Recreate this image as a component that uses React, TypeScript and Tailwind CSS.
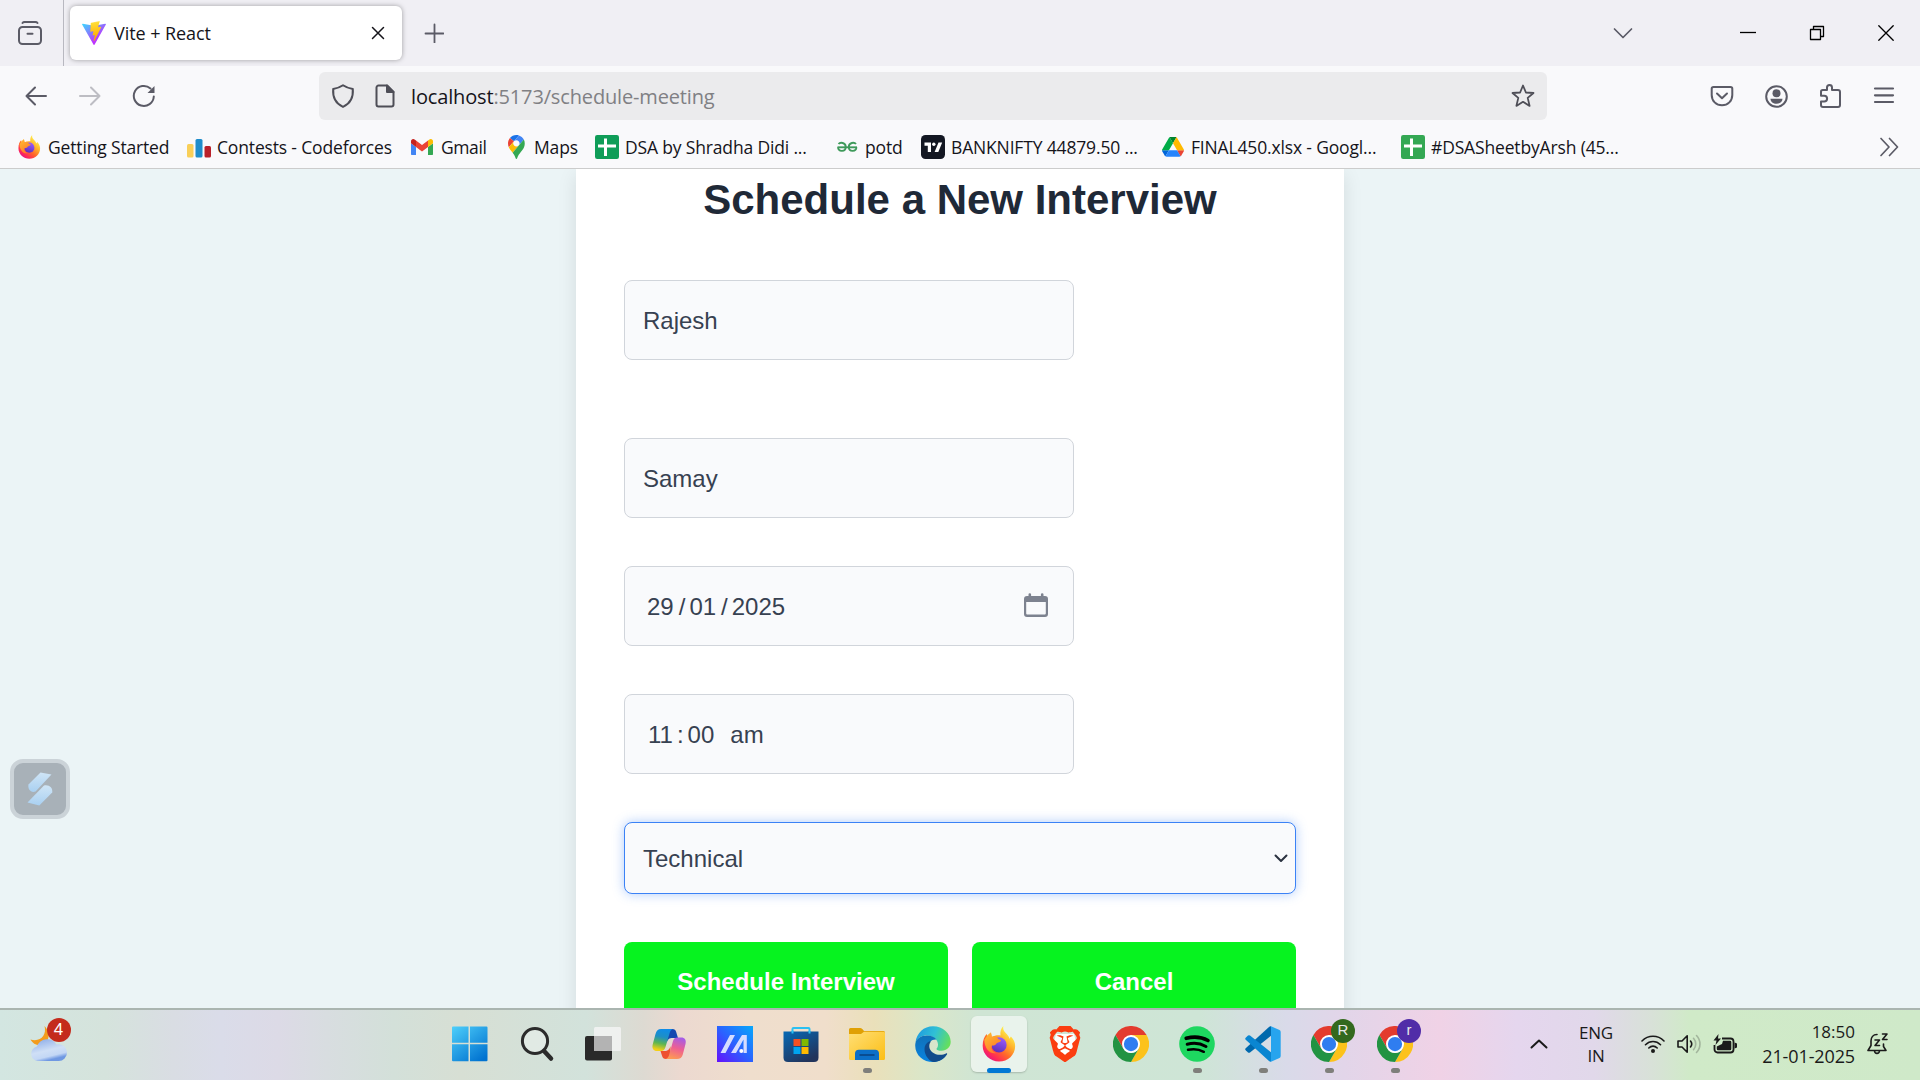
import type { ReactNode } from "react";
import { SiBrave } from "react-icons/si";

/* ---------- toolbar glyphs ---------- */

function Glyph({ children, className = "size-6", box = "0 0 24 24" }: { children: ReactNode; className?: string; box?: string }) {
  return (
    <svg viewBox={box} className={`shrink-0 ${className}`} fill="none" stroke="currentColor" strokeWidth="2" strokeLinecap="round" strokeLinejoin="round">
      {children}
    </svg>
  );
}

const ViteLogo = () => (
  <svg viewBox="0 0 256 257" className="size-6 shrink-0">
    <defs>
      <linearGradient id="vA" x1="0%" x2="58%" y1="8%" y2="78%">
        <stop offset="0%" stopColor="#41D1FF" />
        <stop offset="100%" stopColor="#BD34FE" />
      </linearGradient>
      <linearGradient id="vB" x1="43%" x2="50%" y1="2%" y2="89%">
        <stop offset="0%" stopColor="#FFEA83" />
        <stop offset="8%" stopColor="#FFDD35" />
        <stop offset="100%" stopColor="#FFA800" />
      </linearGradient>
    </defs>
    <path fill="url(#vA)" d="M255.153 37.938L134.897 252.976c-2.483 4.44-8.862 4.466-11.382.048L.875 37.958c-2.746-4.814 1.371-10.646 6.827-9.67l120.385 21.517a6.537 6.537 0 0 0 2.322-.004l117.867-21.483c5.438-.991 9.574 4.796 6.877 9.62Z" />
    <path fill="url(#vB)" d="M185.432.063L96.44 17.501a3.268 3.268 0 0 0-2.634 3.014l-5.474 92.456a3.268 3.268 0 0 0 3.997 3.378l24.777-5.718c2.318-.535 4.413 1.507 3.936 3.838l-7.361 36.047c-.495 2.426 1.782 4.5 4.151 3.78l15.304-4.649c2.372-.72 4.652 1.36 4.15 3.788l-11.698 56.621c-.732 3.542 3.979 5.473 5.943 2.437l1.313-2.028l72.516-144.72c1.215-2.423-.88-5.186-3.54-4.672l-25.505 4.922c-2.396.462-4.435-1.77-3.759-4.114l16.646-57.705c.677-2.35-1.37-4.583-3.769-4.113Z" />
  </svg>
);

function FirefoxLogo({ id, className }: { id: string; className: string }) {
  return (
    <svg viewBox="0 0 36 38" className={`shrink-0 ${className}`}>
      <defs>
        <linearGradient id={`${id}a`} x1="0.85" y1="0.1" x2="0.2" y2="0.95">
          <stop offset="0.05" stopColor="#fff44f" />
          <stop offset="0.35" stopColor="#ffb02a" />
          <stop offset="0.6" stopColor="#ff6a2a" />
          <stop offset="0.85" stopColor="#ff2a56" />
          <stop offset="1" stopColor="#e31587" />
        </linearGradient>
        <linearGradient id={`${id}b`} x1="0.7" y1="0" x2="0.3" y2="1">
          <stop offset="0" stopColor="#9a5cff" />
          <stop offset="1" stopColor="#5b2fb8" />
        </linearGradient>
        <linearGradient id={`${id}c`} x1="0" y1="0" x2="0.6" y2="1">
          <stop offset="0" stopColor="#ffc02e" />
          <stop offset="1" stopColor="#ff7a2a" />
        </linearGradient>
      </defs>
      <path fill={`url(#${id}a)`} d="M22.5 0c-.6 3 .3 5 2.3 7.200C27 9.500 28.500 11 29 13.500l1.500-2.500C33.500 14 35 17.500 35 21c0 9.400-7.600 16.500-17 16.500S.7 30.200.7 20.900C.7 15 2.500 11 5 8.500l1 3 3.500-4 .8 4C13 10 17 9.500 19.500 10 19 6 20 2.500 22.500 0z" />
      <circle cx="18" cy="20" r="8" fill={`url(#${id}b)`} />
      <path fill={`url(#${id}c)`} d="M2.500 14.500L6 9.500l3.500-3 .8 5c3.500-1 5.700.2 7.200 2.500 1.700.2 2.700.7 2.500 1.500-.5 1.500-3.500 1.800-4.800 3-.8 2-3.200 2.300-4.700 2-1.500 4 1 7 5 8-6 2-13-4-13-14z" />
    </svg>
  );
}

const SheetLogo = ({ fill }: { fill: string }) => (
  <svg viewBox="0 0 24 24" className="size-6 shrink-0">
    <rect width="24" height="24" rx="2.200" fill={fill} />
    <path d="M9 3.500h3v6h9v3h-9V21H9v-8.500H3v-3h6z" fill="#fff" />
  </svg>
);

const CodeforcesLogo = () => (
  <svg viewBox="0 0 24 24" className="size-6 shrink-0">
    <rect x="0" y="9" width="6.500" height="13.500" rx="1.500" fill="#f9cf58" />
    <rect x="8.500" y="4" width="7" height="18.500" rx="1.500" fill="#1f8dcb" />
    <rect x="17.500" y="11" width="6.500" height="11.500" rx="1.500" fill="#b9202a" />
  </svg>
);

const GmailLogo = () => (
  <svg viewBox="52 42 88 66" className="w-[22px] shrink-0">
    <path fill="#4285f4" d="M58 108h14V74L52 59v43c0 3.320 2.690 6 6 6" />
    <path fill="#34a853" d="M120 108h14c3.320 0 6-2.690 6-6V59l-20 15" />
    <path fill="#fbbc04" d="M120 48v26l20-15v-8c0-7.420-8.470-11.650-14.400-7.200" />
    <path fill="#ea4335" d="M72 74V48l24 18 24-18v26L96 92" />
    <path fill="#c5221f" d="M52 51v8l20 15V48l-5.600-4.200c-5.940-4.450-14.400-.22-14.400 7.200" />
  </svg>
);

const MapsLogo = () => (
  <svg viewBox="0 0 92.300 132.300" className="h-6 shrink-0">
    <path fill="#1a73e8" d="M60.200 2.200C55.800.8 51 0 46.100 0 32 0 19.300 6.400 10.800 16.500l21.800 18.300L60.200 2.200z" />
    <path fill="#ea4335" d="M10.800 16.500C4.100 24.500 0 34.900 0 46.100c0 8.700 1.700 15.700 4.600 22l28-33.300-21.800-18.300z" />
    <path fill="#4285f4" d="M46.200 28.500c9.800 0 17.700 7.900 17.700 17.700 0 4.300-1.600 8.300-4.200 11.400 0 0 13.900-16.600 27.500-32.700-5.600-10.800-15.300-19-27-22.700L32.600 34.800c3.300-3.800 8.100-6.300 13.600-6.300" />
    <path fill="#fbbc04" d="M46.200 63.800c-9.800 0-17.700-7.900-17.700-17.700 0-4.300 1.500-8.300 4.100-11.300l-28 33.300c4.800 10.600 12.800 19.200 21 29.900l34.100-40.500c-3.300 3.900-8.100 6.300-13.500 6.300" />
    <path fill="#34a853" d="M59.100 109.200c15.400-24.100 33.300-35 33.300-63 0-7.700-1.900-14.900-5.200-21.300L25.600 98c2.600 3.400 5.300 7.300 7.900 11.300 9.400 14.500 6.800 23.100 12.800 23.100s3.400-8.700 12.800-23.200" />
  </svg>
);

const GfgLogo = () => (
  <svg viewBox="0 0 24 24" className="size-6 shrink-0" fill="none" stroke="#3f9a5b" strokeWidth="1.900">
    <path d="M2.500 12.300h19.500" />
    <path d="M3.500 9c1.600-1.900 7.200-1.700 7.200 3 0 5-7.400 5.200-7.600.3M21 9c-1.600-1.900-7.200-1.700-7.200 3 0 5 7.400 5.200 7.600.3" />
  </svg>
);

const TradingViewLogo = () => (
  <svg viewBox="0 0 24 24" className="size-6 shrink-0">
    <rect width="24" height="24" rx="4.500" fill="#131722" />
    <path fill="#fff" d="M3.500 7.500H10V17H6.800v-6.200H3.500zM17.500 7.500h3.700L17.300 17h-3.700z" />
    <circle cx="12.800" cy="9.200" r="1.700" fill="#fff" />
  </svg>
);

const DriveLogo = () => (
  <svg viewBox="0 0 87.300 78" className="ml-px w-[22px] shrink-0">
    <path d="m6.600 66.850 3.850 6.650c.8 1.400 1.950 2.500 3.300 3.300l13.750-23.800h-27.500c0 1.550.4 3.100 1.200 4.500z" fill="#0066da" />
    <path d="m43.650 25-13.750-23.800c-1.350.8-2.500 1.900-3.300 3.300l-25.400 44a9.060 9.060 0 0 0-1.200 4.500h27.500z" fill="#00ac47" />
    <path d="m73.550 76.800c1.350-.8 2.500-1.900 3.300-3.300l1.600-2.750 7.650-13.250c.8-1.400 1.200-2.950 1.200-4.500h-27.502l5.852 11.500z" fill="#ea4335" />
    <path d="m43.650 25 13.750-23.800c-1.350-.8-2.900-1.200-4.500-1.200h-18.500c-1.600 0-3.150.45-4.500 1.200z" fill="#00832d" />
    <path d="m59.800 53h-32.300l-13.750 23.800c1.350.8 2.900 1.200 4.500 1.200h50.800c1.600 0 3.150-.45 4.500-1.200z" fill="#2684fc" />
    <path d="m73.400 26.500-12.700-22c-.8-1.400-1.950-2.500-3.300-3.300l-13.750 23.800 16.150 28h27.450c0-1.550-.4-3.100-1.200-4.500z" fill="#ffba00" />
  </svg>
);

/* ---------- browser chrome ---------- */

function TabStrip() {
  return (
    <header className="flex h-[66px] shrink-0 items-center bg-[#f0eff4] text-[#5b5b66]">
      <div className="flex h-full w-16 items-center border-r border-[#b8b8c0] pl-[18px]">
        <Glyph>
          <path d="M4.500 2c.5-.7 1-1 2-1h11c1 0 1.500.3 2 1" />
          <rect x="1" y="6" width="22" height="17" rx="3.500" />
          <path d="M9.500 12.800h5" />
        </Glyph>
      </div>
      <div className="ml-1.5 flex h-[54px] w-[332px] items-center rounded-md bg-white pl-3 pr-[17px] text-[#15141a] shadow-[0_0_5px_rgba(0,0,0,0.35)]">
        <ViteLogo />
        <span className="ml-2 flex-1 pt-px text-[18px] tracking-[-0.06px]">Vite + React</span>
        <Glyph className="size-3.5" box="0 0 14 14">
          <path d="M1.500 1.500l11 11M12.500 1.500l-11 11" strokeWidth="1.500" />
        </Glyph>
      </div>
      <Glyph className="ml-[22px] size-5" box="0 0 20 20">
        <path d="M10.500 1.500v18M1.500 10.500h18" strokeWidth="1.800" />
      </Glyph>
      <div className="flex-1" />
      <Glyph className="h-3 w-5" box="0 0 20 12">
        <path d="M1.500 2L10 10.500 18.500 2" strokeWidth="1.700" />
      </Glyph>
      <div className="ml-[107px] mr-[26px] flex items-center gap-[53px] text-black">
        <Glyph className="size-4" box="0 0 16 16">
          <path d="M0 7.500h16" strokeWidth="1.300" strokeLinecap="butt" />
        </Glyph>
        <Glyph className="size-4" box="0 0 16 16">
          <path d="M4.500 4V1.500h10v10H12M1.500 4.500h10v10h-10z" strokeWidth="1.300" />
        </Glyph>
        <Glyph className="size-4" box="0 0 16 16">
          <path d="M.8.8l14.400 14.400M15.200.8L.8 15.200" strokeWidth="1.300" />
        </Glyph>
      </div>
    </header>
  );
}

function NavBar() {
  return (
    <div className="flex h-[60px] shrink-0 items-center bg-[#f9f9fb] pl-6 pr-6 text-[#5b5b66]">
      <div className="flex items-center gap-[30px]">
        <Glyph>
          <path d="M22 12H2.500M11 3.500L2.500 12l8.500 8.500" />
        </Glyph>
        <Glyph className="size-6 text-[#bdbdc3]">
          <path d="M2 12h19.500M13 3.500l8.500 8.500-8.500 8.500" />
        </Glyph>
        <Glyph>
          <path d="M21.800 12.500A10 10 0 1 1 18.500 4.500" />
          <path d="M22.500 2v7h-7z" fill="currentColor" stroke="none" />
        </Glyph>
      </div>
      <div className="ml-[163px] flex h-12 w-[1228px] items-center rounded-md bg-[#ebebed] pl-3 pr-3 text-[#4e4e57]">
        <Glyph>
          <path d="M12 1.300c2.800 2 5.900 3 9.800 3.600.6 7.500-1.800 14.400-9.800 18-8-3.600-10.400-10.500-9.800-18C6.100 4.300 9.200 3.300 12 1.300z" />
        </Glyph>
        <Glyph className="ml-[18px] size-6">
          <path d="M5.500 1.500H14l6.500 6.500v12.500a2 2 0 0 1-2 2h-13a2 2 0 0 1-2-2v-17a2 2 0 0 1 2-2z" />
          <path d="M14 1.500V8h6.500z" fill="currentColor" />
        </Glyph>
        <p className="ml-3.5 flex-1 pt-0.5 text-xl tracking-[-0.15px] text-[#808084]">
          <span className="text-[#15141a]">localhost</span>:5173/schedule-meeting
        </p>
        <Glyph>
          <path d="M12 1.500l2.900 7 7.600.5-5.800 4.900 1.900 8L12 17.800l-6.600 4.100 1.900-8L1.500 9l7.600-.5z" strokeWidth="1.800" />
        </Glyph>
      </div>
      <div className="flex-1" />
      <div className="flex items-center gap-[30px]">
        <Glyph>
          <path d="M3.500 3h17a1.800 1.800 0 0 1 1.800 1.800V11c0 6-4.500 10.300-10.300 10.300S1.700 17 1.700 11V4.800A1.800 1.800 0 0 1 3.500 3z" />
          <path d="M7 9.500l5 4.800 5-4.800" />
        </Glyph>
        <Glyph>
          <circle cx="12.500" cy="12.500" r="10.300" />
          <circle cx="12.500" cy="9.300" r="4" fill="currentColor" stroke="none" />
          <path d="M6.500 14.700h12c0 3-2.700 5-6 5s-6-2-6-5z" fill="currentColor" stroke="none" />
        </Glyph>
        <Glyph>
          <path d="M3 9.500V7.800A1.800 1.800 0 0 1 4.800 6H9V3.500a2.500 2.500 0 0 1 5 0V6h6a2 2 0 0 1 2 2v13a2 2 0 0 1-2 2H5a2 2 0 0 1-2-2v-3.500h3.200a2.900 2.900 0 0 0 0-5.800H3z" />
        </Glyph>
        <Glyph>
          <path d="M3 4.500h18M3 11.300h18M3 18h18" strokeWidth="2.200" />
        </Glyph>
      </div>
    </div>
  );
}

function Bookmark({ icon, label, width }: { icon: ReactNode; label: string; width: string }) {
  return (
    <div className={`flex shrink-0 items-center ${width}`}>
      <span className="flex w-[30px] shrink-0 items-center">{icon}</span>
      <span className="whitespace-nowrap">{label}</span>
    </div>
  );
}

function BookmarksBar() {
  return (
    <div className="flex h-[43px] shrink-0 items-center border-b border-[#cccccc] bg-[#f9f9fb] pl-[18px] text-[17.5px] tracking-[-0.16px] text-[#15141a]">
      <Bookmark width="w-[169px]" label="Getting Started" icon={<FirefoxLogo id="fs" className="h-6" />} />
      <Bookmark width="w-[224px]" label="Contests - Codeforces" icon={<CodeforcesLogo />} />
      <Bookmark width="w-[93px] tracking-[-0.4px]" label="Gmail" icon={<GmailLogo />} />
      <Bookmark width="w-[91px]" label="Maps" icon={<span className="pl-1"><MapsLogo /></span>} />
      <Bookmark width="w-[240px]" label="DSA by Shradha Didi ..." icon={<SheetLogo fill="#0f9d58" />} />
      <Bookmark width="w-[86px]" label="potd" icon={<GfgLogo />} />
      <Bookmark width="w-[240px]" label="BANKNIFTY 44879.50 ..." icon={<TradingViewLogo />} />
      <Bookmark width="w-[240px]" label="FINAL450.xlsx - Googl..." icon={<DriveLogo />} />
      <Bookmark width="w-[240px]" label="#DSASheetbyArsh (45..." icon={<SheetLogo fill="#34a853" />} />
      <div className="flex-1" />
      <Glyph className="mr-[21px] h-5 w-5 text-[#5b5b66]" box="0 0 20 20">
        <path d="M2 1.500l8 8.500-8 8.500M10.500 1.500l8 8.500-8 8.500" strokeWidth="1.700" />
      </Glyph>
    </div>
  );
}

/* ---------- page ---------- */

function Field({ children, className = "" }: { children: ReactNode; className?: string }) {
  return (
    <div className={`flex h-20 w-[450px] items-center rounded-lg border border-[#d1d5db] bg-[#f9fafc] px-[18px] pt-0.5 text-2xl text-[#374151] ${className}`}>
      {children}
    </div>
  );
}

function SchedulePage() {
  return (
    <main className="relative flex h-[839px] shrink-0 justify-center overflow-hidden bg-[#ebf4f6] font-['Liberation_Sans',sans-serif]">
      <section className="flex h-[900px] w-[768px] flex-col bg-white px-12 shadow-[0_6px_18px_rgba(0,0,0,0.1)]">
        <h1 className="mt-1 text-center text-[42px] leading-[54px] font-bold text-[#1f2937]">Schedule a New Interview</h1>
        <Field className="mt-[53px]">Rajesh</Field>
        <Field className="mt-[78px]">Samay</Field>
        <Field className="mt-12 justify-between">
          <div className="flex pl-1">
            <span>29</span>
            <span className="ml-[5px]">/</span>
            <span className="ml-1">01</span>
            <span className="ml-[5px]">/</span>
            <span className="ml-1">2025</span>
          </div>
          <svg viewBox="0 0 24 24" className="mr-[7px] mb-1 size-6">
            <path fill="#7d828f" d="M4.500 1.500a1.300 1.300 0 0 1 2.600 0V3h9.800V1.500a1.300 1.300 0 0 1 2.600 0V3H21a3 3 0 0 1 3 3v15a3 3 0 0 1-3 3H3a3 3 0 0 1-3-3V6a3 3 0 0 1 3-3h1.500zM2.200 9v11.300c0 .8.500 1.300 1.300 1.300h17c.8 0 1.300-.5 1.300-1.300V9z" />
          </svg>
        </Field>
        <Field className="mt-12">
          <div className="flex pl-[5px]">
            <span>11</span>
            <span className="ml-1">:</span>
            <span className="ml-1">00</span>
            <span className="ml-4">am</span>
          </div>
        </Field>
        <div className="mt-12 flex h-[72px] shrink-0 items-center justify-between rounded-lg border border-[#3b82f6] bg-[#f9fafc] pl-[18px] pr-[7px] text-2xl text-[#374151] shadow-[0_0_12px_rgba(59,130,246,0.4)]">
          <span className="pt-0.5">Technical</span>
          <svg viewBox="0 0 14 9" className="mt-px h-[9px] w-3.5" fill="none" stroke="#2b3240" strokeWidth="2" strokeLinecap="round" strokeLinejoin="round">
            <path d="M1.500 1.500L7 7l5.500-5.500" />
          </svg>
        </div>
        <div className="mt-12 grid grid-cols-2 gap-6 text-2xl font-bold text-white">
          <button className="h-20 rounded-lg bg-[#06f31f]">Schedule Interview</button>
          <button className="h-20 rounded-lg bg-[#06f31f]">Cancel</button>
        </div>
      </section>
      <div className="absolute top-[590px] left-2.5 flex size-[60px] items-center justify-center rounded-[13px] border-4 border-[#cbd3d8] bg-[#a8b1b8]">
        <svg viewBox="0 0 26 34" className="h-[34px] w-[26px]">
          <defs>
            <linearGradient id="wg" x1="0" y1="0" x2="0" y2="1">
              <stop offset="0" stopColor="#cfe5f6" />
              <stop offset="1" stopColor="#a9d0f1" />
            </linearGradient>
          </defs>
          <path fill="url(#wg)" d="M13.500.5l11 2L8.500 19.500C4 21.500.5 17 1.500 12.500z" />
          <path fill="url(#wg)" d="M12.300 33.500l-11.800-3L17 13.500c5-1 9 2 8.200 7z" />
        </svg>
      </div>
    </main>
  );
}

/* ---------- taskbar icons ---------- */

const WindowsIcon = () => (
  <svg viewBox="0 0 36 36" className="size-9">
    <defs>
      <linearGradient id="win" gradientUnits="userSpaceOnUse" x1="0" y1="0" x2="28" y2="36">
        <stop offset="0" stopColor="#4fd0fb" />
        <stop offset="1" stopColor="#0072d0" />
      </linearGradient>
    </defs>
    <path fill="url(#win)" d="M0 1.500Q0 .5 1 .5h15.500v16.300H0zM18 .5h16.500q1 0 1 1v15.300H18zM0 18.300h16.500v17H1q-1 0-1-1zM18 18.300h17.500v16q0 1-1 1H18z" />
  </svg>
);

const SearchIcon = () => (
  <svg viewBox="0 0 36 36" className="size-9" fill="none" stroke="#2b2b2b" strokeLinecap="round">
    <circle cx="16" cy="15" r="12.600" fill="#e9f0ec" fillOpacity="0.6" strokeWidth="3" />
    <path d="M25.500 25.500l6.500 7" strokeWidth="4.500" />
  </svg>
);

const TaskViewIcon = () => (
  <svg viewBox="0 0 36 36" className="size-9">
    <rect x="0" y="10" width="27" height="24.500" rx="2" fill="#2a2a2a" />
    <rect x="9" y="1" width="27" height="24" rx="1.500" fill="#f5f5f5" fillOpacity="0.8" />
    <path d="M9 10h18v15H9z" fill="#b3b3b3" />
  </svg>
);

const CopilotIcon = () => (
  <svg viewBox="0 0 36 36" className="size-9">
    <defs>
      <linearGradient id="cpA" x1="0.5" y1="0" x2="0.3" y2="1">
        <stop offset="0" stopColor="#0f8ce8" />
        <stop offset="0.35" stopColor="#1e8fc4" />
        <stop offset="0.65" stopColor="#5cb552" />
        <stop offset="0.95" stopColor="#f3cf16" />
      </linearGradient>
      <linearGradient id="cpB" x1="0.7" y1="0" x2="0.4" y2="1">
        <stop offset="0" stopColor="#a45ce8" />
        <stop offset="0.5" stopColor="#ee5f92" />
        <stop offset="1" stopColor="#fd9a55" />
      </linearGradient>
    </defs>
    <path fill="#1448b0" d="M17 3h4.500c2 0 3 1 3.600 2.800L27 12h-5c-4 0-5 1-6.500 5z" />
    <path fill="#ee5030" d="M19.500 33H15c-2.300 0-3.300-1-4-3.200L9.500 25h4c3.500 0 5-1.500 6-5z" />
    <path fill="url(#cpA)" d="M10 3h12c-2 .5-2.800 2-3.500 4.500L14.500 21c-.8 2.800-2 4-4.500 4H6c-3.500 0-5.300-2.500-4.300-6.500L4.500 8C5.500 4.500 7 3 10 3z" />
    <path fill="url(#cpB)" d="M26 33H14.500c2-.5 3-2 3.700-4.500L22 15c.8-2.500 2-3.500 4.500-3.500h3.800c3.500 0 5.200 2.500 4.200 6.500l-2.700 10.500C31 31.700 29 33 26 33z" />
  </svg>
);

const MyAsusIcon = () => (
  <svg viewBox="0 0 36 36" className="size-9">
    <defs>
      <linearGradient id="asus" x1="0" y1="1" x2="1" y2="0">
        <stop offset="0" stopColor="#6410fb" />
        <stop offset="0.5" stopColor="#2a63ff" />
        <stop offset="1" stopColor="#06a8fb" />
      </linearGradient>
    </defs>
    <path d="M0 0h36v36H0z" fill="url(#asus)" />
    <path d="M13 9h5L8.500 27h-5zM25 9h4.800v18h-3.300V13.500L19 27h-5z" fill="#d5dcff" />
    <circle cx="24.300" cy="25" r="2" fill="#fff" />
  </svg>
);

const StoreIcon = () => (
  <svg viewBox="0 0 36 36" className="size-9">
    <defs>
      <linearGradient id="store" x1="0" y1="0" x2="0.6" y2="1">
        <stop offset="0" stopColor="#0669b5" />
        <stop offset="1" stopColor="#22345c" />
      </linearGradient>
    </defs>
    <path d="M9.500 8V3q0-1 1-1h15q1 0 1 1v5" fill="none" stroke="#2bc0f2" strokeWidth="2" />
    <path d="M.5 5.500h35v26q0 4.500-4.500 4.500H5Q.5 36 .5 31.500z" fill="url(#store)" />
    <path d="M9.500 5v2.500M26.500 5v2.500" stroke="#2bc0f2" strokeWidth="2" />
    <path d="M10.500 13h7v7h-7z" fill="#f25022" />
    <path d="M18.500 13h7v7h-7z" fill="#7fba00" />
    <path d="M10.500 21h7v7h-7z" fill="#00a4ef" />
    <path d="M18.500 21h7v7h-7z" fill="#ffb900" />
  </svg>
);

const ExplorerIcon = () => (
  <svg viewBox="0 0 36 36" className="size-9">
    <defs>
      <linearGradient id="fold" x1="0" y1="0" x2="1" y2="1">
        <stop offset="0" stopColor="#ffdf76" />
        <stop offset="1" stopColor="#fcbe15" />
      </linearGradient>
    </defs>
    <path d="M0 3.500Q0 2 1.500 2h9.800q1.500 0 2.500 1.500L15 5h19.500Q36 5 36 6.500V12H0z" fill="#e0a004" />
    <path d="M0 8h12l3-2.200h19.500Q36 5.800 36 7v25.500Q36 34 34.500 34h-33Q0 34 0 32.500z" fill="url(#fold)" />
    <path d="M6 34v-6.500q0-3.800 3.800-3.800h16.400q3.800 0 3.800 3.800V34z" fill="#0b6fc8" />
    <path d="M10.500 29h15" stroke="#09498b" strokeWidth="1.800" />
  </svg>
);

const EdgeIcon = () => (
  <svg viewBox="0 0 36 36" className="size-9">
    <defs>
      <linearGradient id="edA" x1="0" y1="0.3" x2="1" y2="0.6">
        <stop offset="0" stopColor="#1f9be0" />
        <stop offset="0.5" stopColor="#30c0d5" />
        <stop offset="1" stopColor="#66e05a" />
      </linearGradient>
      <linearGradient id="edB" x1="0.3" y1="0" x2="0.3" y2="1">
        <stop offset="0" stopColor="#1070b8" />
        <stop offset="1" stopColor="#0a84e0" />
      </linearGradient>
    </defs>
    <path fill="url(#edA)" d="M.5 16.500C1.500 7 9 .3 18 .3c10 0 17.700 7.200 17.700 15.500 0 5.500-4.200 9-9 9-3.200 0-5.200-.8-5.200-1.800 0-.8 1.500-1.200 1.500-4.500 0-5-5-9-11-9C6.500 9.500 2.500 12 .5 16.500z" />
    <path fill="url(#edB)" d="M.3 18C1 12.500 6 9.500 12 9.500c4 0 7.500 1.500 9.500 4-5-.5-8 2.800-8 7 0 7 6 11 10.500 11 2.500 0 5-.8 7-2C28 33.800 23.500 36 18 36 8 36-.7 28.500.3 18z" />
    <path fill="#114a8b" d="M14.500 15.200c-3.500 1.500-5 4.500-5 8C9.500 30 15 35.800 19 35.900c5.200-.2 10-3 13-7.400.5-.8-.3-1.500-1-1-1.500.8-3.500 1.300-5.700 1.300-6.500 0-11-4-11-8.600 0-2 .6-3.600 1.700-4.700z" />
  </svg>
);

const BraveIcon = () => (
  <span className="relative flex size-9 items-center justify-center">
    <svg viewBox="0 0 36 36" className="absolute size-9">
      <path d="M9 8h18l2 8-4 12-7 5-7-5-4-12z" fill="#fff" />
    </svg>
    <SiBrave className="relative size-9 text-[#fb3d10]" />
  </span>
);

const ChromeIcon = () => (
  <svg viewBox="0 0 48 48" className="size-9">
    <path d="M3.200 12A24 24 0 0 1 44.800 12H24L13.600 30z" fill="#e33b2e" />
    <path d="M44.800 12A24 24 0 0 1 24 48L34.400 30 24 12z" fill="#fcc21b" />
    <path d="M24 48A24 24 0 0 1 3.200 12L13.600 30a12 12 0 0 0 20.800 0z" fill="#229342" />
    <circle cx="24" cy="24" r="12" fill="#fff" />
    <circle cx="24" cy="24" r="9.500" fill="#2f7df0" />
  </svg>
);

const SpotifyIcon = () => (
  <svg viewBox="0 0 36 36" className="size-9">
    <circle cx="18" cy="18" r="17.800" fill="#1ed760" />
    <g fill="none" stroke="#000" strokeLinecap="round">
      <path d="M7.200 12.300c7.500-2 15.500-1.300 21.800 2.200" strokeWidth="3.600" />
      <path d="M8.200 18.300c6.500-1.700 13.200-1 18.800 2.200" strokeWidth="3" />
      <path d="M9 23.800c5.500-1.200 11-.7 15.800 2" strokeWidth="2.500" />
    </g>
  </svg>
);

const CodeIcon = () => (
  <svg viewBox="0 0 36 36" className="size-9">
    <path d="M26 .3L34.500 4q1.200.6 1.200 2v24q0 1.400-1.200 2L26 35.700z" fill="#27a4ee" />
    <path d="M26 .3v9.500L5 26.500q-1 .7-2 0l-2.300-2.200q-1-1 0-2L24 .9q1-.9 2-.6z" fill="#0069ad" />
    <path d="M26 35.700v-9.500L5 9.500q-1-.7-2 0L.7 11.700q-1 1 0 2L24 35.100q1 .9 2 .6z" fill="#0a86d1" />
  </svg>
);

function TaskItem({ children, state }: { children: ReactNode; state?: "running" | "active" }) {
  return (
    <div className="relative flex h-[70px] w-[66px] shrink-0 items-center justify-center">
      {state === "active" && <span className="absolute top-1.5 h-14 w-14 rounded-md bg-white/55 shadow-[0_1px_2px_rgba(0,0,0,0.2)]" />}
      <span className="relative mb-[3px] block">{children}</span>
      {state === "active" && <span className="absolute top-[58px] h-[5px] w-6 rounded-full bg-[#0078d4]" />}
      {state === "running" && <span className="absolute top-[58px] h-[5px] w-[9px] rounded-full bg-[#7f7f7b]" />}
    </div>
  );
}

function Badge({ children, className }: { children: ReactNode; className: string }) {
  return (
    <span className={`absolute flex size-6 items-center justify-center rounded-full font-['Liberation_Sans',sans-serif] text-[15px] text-[#e8e8e8] ${className}`}>
      {children}
    </span>
  );
}

function Taskbar() {
  return (
    <footer className="flex h-[72px] shrink-0 items-center border-t-2 border-[#aab5b0] bg-[linear-gradient(90deg,#d3e6e1_0%,#d5e3dc_5.500%,#d9dde3_9%,#dadce9_11.500%,#dcdae6_14.500%,#d8dde0_17%,#d3e0d9_20.500%,#d7dfd4_24%,#d2e2db_30.500%,#dddad2_33.500%,#ecd9d0_35.500%,#efdecd_39%,#f0decb_43%,#eae0ba_45.500%,#dbe6c8_48%,#cfe5d4_51%,#cee5d6_62.500%,#d9dae9_67%,#e2d5e9_70%,#f0d2e6_75%,#e5d6ee_79%,#e1d8ea_83%,#d8e1d8_86%,#d0eac8_88%,#cfe9c9_100%)] text-[#1a1a1a]">
      <div className="relative ml-7 h-[70px] w-12 shrink-0">
        <svg viewBox="0 0 40 36" className="absolute top-4 left-0.5 h-9 w-10">
          <defs>
            <linearGradient id="cl" x1="0" y1="0" x2="0.4" y2="1">
              <stop offset="0" stopColor="#86a7e6" />
              <stop offset="0.6" stopColor="#cfdff6" />
              <stop offset="0.85" stopColor="#c3d7f5" />
              <stop offset="1" stopColor="#6f98e2" />
            </linearGradient>
          </defs>
          <path d="M14.500 0c2.500 9-4 16.500-14 13.500C3 18 8 20.500 13 18.500S22 8 14.500 0z" fill="#f39c1b" />
          <path d="M7.500 35a7.300 7.300 0 0 1-.5-14.400A10.800 10.800 0 0 1 26.500 18.500 8.400 8.400 0 1 1 28 35z" fill="url(#cl)" />
        </svg>
        <Badge className="top-2 left-[18.500px] bg-[#c42b1c] text-[17px] text-white">4</Badge>
      </div>
      <nav className="ml-[362px] flex">
        <TaskItem><span className="mr-[3px] block"><WindowsIcon /></span></TaskItem>
        <TaskItem><SearchIcon /></TaskItem>
        <TaskItem><TaskViewIcon /></TaskItem>
        <TaskItem><CopilotIcon /></TaskItem>
        <TaskItem><MyAsusIcon /></TaskItem>
        <TaskItem><StoreIcon /></TaskItem>
        <TaskItem state="running"><ExplorerIcon /></TaskItem>
        <TaskItem><EdgeIcon /></TaskItem>
        <TaskItem state="active"><FirefoxLogo id="fl" className="h-9" /></TaskItem>
        <TaskItem><BraveIcon /></TaskItem>
        <TaskItem><ChromeIcon /></TaskItem>
        <TaskItem state="running"><SpotifyIcon /></TaskItem>
        <TaskItem state="running"><CodeIcon /></TaskItem>
        <TaskItem state="running">
          <ChromeIcon />
          <Badge className="top-[-7px] left-5 bg-[#33691e]">R</Badge>
        </TaskItem>
        <TaskItem state="running">
          <ChromeIcon />
          <Badge className="top-[-7px] left-5 bg-[#512da8]">r</Badge>
        </TaskItem>
      </nav>
      <div className="flex-1" />
      <div className="mb-[3px] flex items-center">
        <Glyph className="h-2.5 w-[18px]" box="0 0 18 10">
          <path d="M1.500 8.500L9 1.500l7.500 7" />
        </Glyph>
        <div className="ml-[30px] w-9 text-center text-[17px] leading-[23px] tracking-[-0.2px]">
          <div>ENG</div>
          <div>IN</div>
        </div>
        <svg viewBox="0 0 24 20" className="ml-[27px] h-5 w-6" fill="none" stroke="currentColor" strokeWidth="1.600" strokeLinecap="round">
          <path d="M1 7c6.200-6.300 15.800-6.300 22 0M4.500 10.700c4.300-4.300 10.700-4.300 15 0M7.800 14c2.500-2.500 5.900-2.500 8.400 0" />
          <circle cx="12" cy="17" r="2" fill="currentColor" stroke="none" />
        </svg>
        <svg viewBox="0 0 24 20" className="ml-3 h-5 w-6" fill="none" stroke="currentColor" strokeWidth="1.600" strokeLinecap="round" strokeLinejoin="round">
          <path d="M1 7h4l5.200-5.200v16.400L5 13H1zM13.500 7c1.500 1.800 1.500 4.200 0 6" />
          <path d="M16.500 4.300c3 3.200 3 8.200 0 11.400M19.500 1.500c4.600 4.800 4.600 12.200 0 17" opacity="0.25" />
        </svg>
        <svg viewBox="0 0 24 20" className="ml-3 h-5 w-6">
          <path d="M9 4.500h8.500A3 3 0 0 1 20.500 7.500v8a3 3 0 0 1-3 3h-13a3 3 0 0 1-3-3V11" fill="none" stroke="currentColor" strokeWidth="1.800" />
          <path d="M10 6.800h7a1.300 1.300 0 0 1 1.300 1.200v7a1.300 1.300 0 0 1-1.300 1.300H5A1.300 1.300 0 0 1 3.800 15v-2.500L9 10zM21.500 8.500l2 .8q.5.200.5.700v3q0 .5-.5.700l-2 .8z" fill="currentColor" />
          <path d="M5.500 0L.5 6.500h3L2.500 11l5.500-6.500H5z" fill="currentColor" />
        </svg>
        <div className="ml-[23px] w-[95px] text-right leading-6">
          <div className="text-[17px]">18:50</div>
          <div className="text-[18px] tracking-[-0.12px]">21-01-2025</div>
        </div>
        <svg viewBox="0 0 22 22" className="ml-3 mr-[31px] size-[22px]" fill="none" stroke="currentColor" strokeWidth="1.600" strokeLinecap="round" strokeLinejoin="round">
          <path d="M10 1.500C6 1.500 4 4.500 4 8v4.500L1 17.500h18l-2.500-4V11M7.500 18c.3 3.200 4.700 3.200 5 0" />
          <path d="M8 7h4.500L8 12.500h4.500M15.500 1h4.500l-4.500 5.500H20" />
        </svg>
      </div>
    </footer>
  );
}

export default function App() {
  return (
    <div className="flex h-[1080px] w-[1920px] flex-col overflow-hidden bg-white font-['Open_Sans','Noto_Sans',sans-serif]">
      <TabStrip />
      <NavBar />
      <BookmarksBar />
      <SchedulePage />
      <Taskbar />
    </div>
  );
}
